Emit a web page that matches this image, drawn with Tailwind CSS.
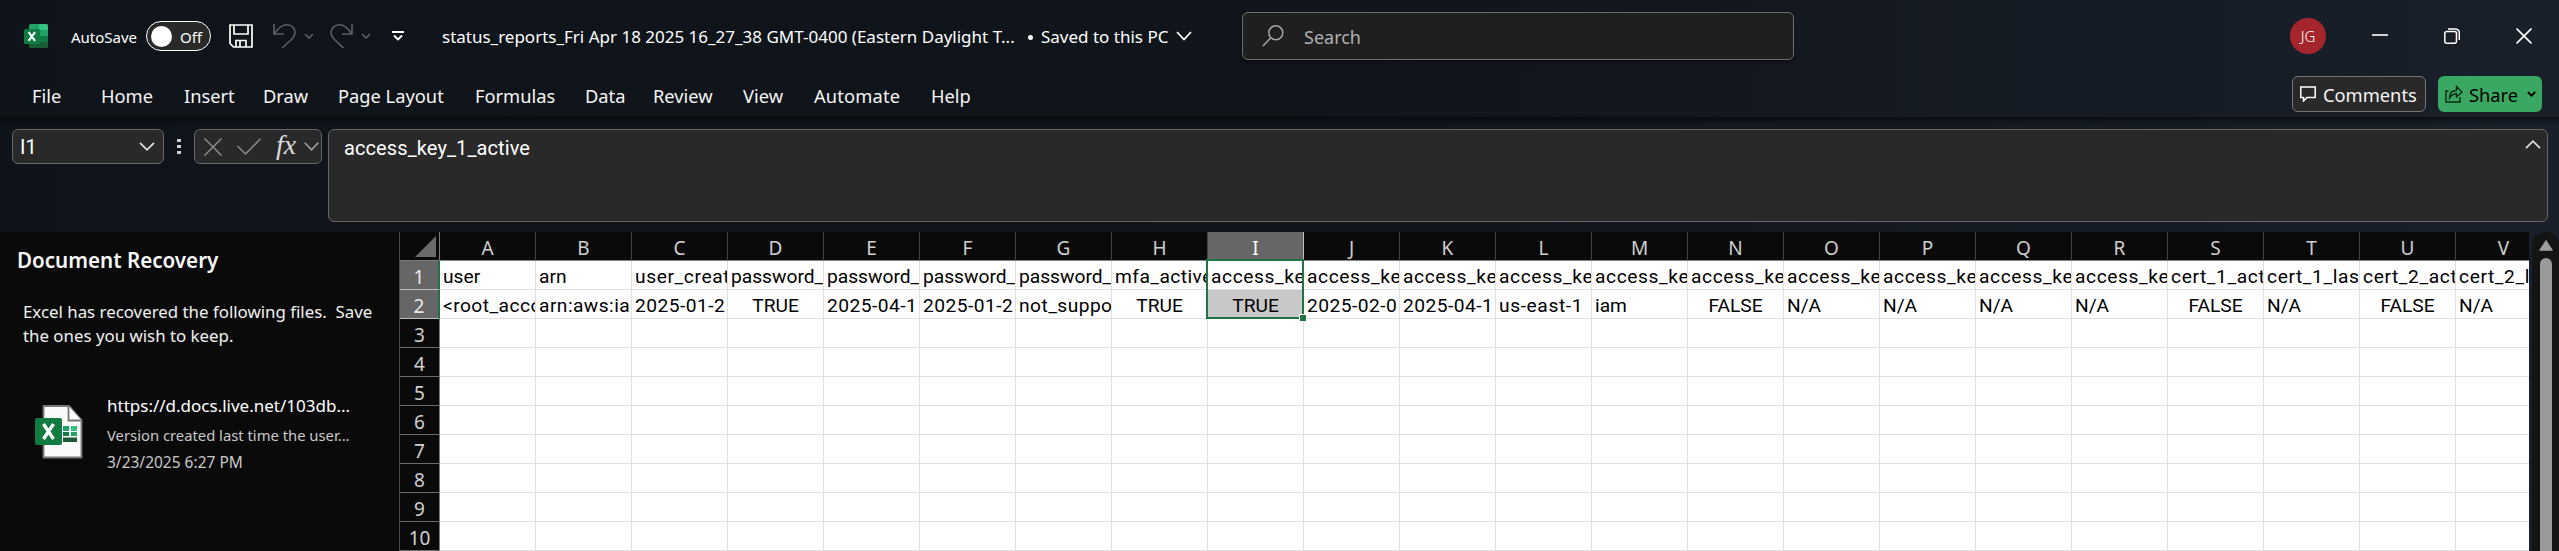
<!DOCTYPE html>
<html lang="en">
<head>
<meta charset="utf-8">
<title>Excel</title>
<script src="https://cdn.jsdelivr.net/npm/@tailwindcss/browser@4"></script>
</head>
<body class="w-[2559px] h-[551px] overflow-hidden flex flex-col bg-linear-to-r from-[#0f131a] via-[#10141b] to-[#19202a] font-['Noto_Sans','Open_Sans',sans-serif] text-white whitespace-nowrap">

<!-- Title bar -->
<header class="h-[72px] shrink-0 flex items-center">
  <svg class="ml-6 w-6 h-6" viewBox="0 0 24 24">
    <path d="M5 1.500a1.500 1.500 0 0 1 1.500-1.500H15v6H5z" fill="#21a366"/><path d="M15 0h7.500A1.500 1.500 0 0 1 24 1.500V6h-9z" fill="#33c481"/>
    <path d="M5 6h10v6H5z" fill="#107c41"/><path d="M15 6h9v6h-9z" fill="#21a366"/><path d="M15 12h9v6h-9z" fill="#107c41"/>
    <path d="M5 12h10v6h9v4.500a1.500 1.500 0 0 1-1.500 1.500h-16A1.500 1.500 0 0 1 5 22.500z" fill="#185c37"/>
    <rect x="0" y="5" width="16" height="15" rx="1.500" fill="#107c41"/>
    <path d="M4.600 8.200l6.400 8.600M11 8.200l-6.400 8.600" stroke="#fff" stroke-width="2.100"/>
  </svg>
  <span class="ml-[23px] mt-[2px] w-[75px] text-[15px]">AutoSave</span>
  <div class="w-[65px] h-[30px] rounded-full border border-white bg-[#292929] flex items-center pl-1">
    <span class="size-[21px] rounded-full bg-white"></span><span class="ml-2 mt-[2px] text-[15px]">Off</span>
  </div>
  <svg class="ml-[18px] w-6 h-6" viewBox="0 0 24 24" fill="none" stroke="#fff" stroke-width="1.700"><path d="M1 1h22v22H4.500L1 19.500zM5 1v9h14V1M7 23v-6.500h10V23M11 17v6"/></svg>
  <svg class="ml-5 w-6 h-6" viewBox="0 0 24 24" fill="none" stroke="#5c5f63" stroke-width="1.600"><path d="M1 0v10h10M1.500 9.500C6 3 10 .8 14 .8c5 0 8 3.600 8 7.700 0 3-1.600 5-3.500 7L9 24"/></svg>
  <svg class="ml-[7px] w-[10px] h-[6px]" viewBox="0 0 10 6" fill="none" stroke="#5c5f63" stroke-width="1.600"><path d="M1 1l4 4 4-4"/></svg>
  <svg class="ml-4 w-6 h-6" viewBox="0 0 24 24" fill="none" stroke="#5c5f63" stroke-width="1.600"><path d="M22 0v10H12M21.500 9.500C17 3 13 .8 9.500 .8 4.500 .8 1 4.400 1 8.500c0 3 1.600 5 3.500 7L13.500 24"/></svg>
  <svg class="ml-[7px] w-[10px] h-[6px]" viewBox="0 0 10 6" fill="none" stroke="#5c5f63" stroke-width="1.600"><path d="M1 1l4 4 4-4"/></svg>
  <svg class="ml-[21px] w-3 h-[10px]" viewBox="0 0 12 10" fill="none" stroke="#fff" stroke-width="1.800"><path d="M0 1h12M2 4.500l4 4 4-4"/></svg>
  <span class="ml-[38px] mt-[2px] w-[587px] text-[17px]">status_reports_Fri Apr 18 2025 16_27_38 GMT-0400 (Eastern Daylight T...</span>
  <span class="size-[5px] mt-[2px] rounded-full bg-white -ml-[1px]"></span>
  <span class="ml-[8px] mt-[2px] w-[133px] text-[17px]">Saved to this PC</span>
  <svg class="ml-[2px] w-4 h-[10px]" viewBox="0 0 16 10" fill="none" stroke="#fff" stroke-width="1.800"><path d="M1 1l7 7.500L15 1"/></svg>
  <div class="ml-[50px] w-[552px] h-12 rounded-md border border-[#6f6f6f] bg-[#1f1f1f] flex items-center shadow-[0_2px_3px_#00000080]">
    <svg class="ml-[19px] w-[22px] h-[22px]" viewBox="0 0 22 22" fill="none" stroke="#a6a6a6" stroke-width="1.500"><circle cx="13.800" cy="7.800" r="7"/><path d="M8.800 12.800L1 21"/></svg>
    <span class="ml-5 mt-[2px] text-[18px] text-[#b0b0b0]">Search</span>
  </div>
  <span class="ml-[496px] size-9 rounded-full bg-[#a4262c] flex items-center justify-center text-[15px] font-light pt-px">JG</span>
  <svg class="ml-[46px] w-4 h-4" viewBox="0 0 16 16" stroke="#fff" stroke-width="1.600"><path d="M0 7h16"/></svg>
  <svg class="ml-14 w-4 h-4" viewBox="0 0 16 16" fill="none" stroke="#fff" stroke-width="1.500"><rect x=".8" y="3.500" width="11.700" height="11.700" rx="2"/><path d="M4 1h7.500a3.800 3.800 0 0 1 3.800 3.800V12"/></svg>
  <svg class="ml-14 w-4 h-4" viewBox="0 0 16 16" stroke="#fff" stroke-width="1.600"><path d="M.5.500l15 15M15.500.500l-15 15"/></svg>
</header>

<!-- Ribbon tabs -->
<nav class="h-[45px] shrink-0 flex items-start text-[18.300px] leading-[47px] text-[#f5f5f5]">
  <span class="ml-8 w-[69px]">File</span><span class="w-[83px]">Home</span><span class="w-[79px]">Insert</span><span class="w-[75px]">Draw</span><span class="w-[137px]">Page Layout</span><span class="w-[110px]">Formulas</span><span class="w-[68px]">Data</span><span class="w-[90px]">Review</span><span class="w-[71px]">View</span><span class="w-[117px] tracking-[0.150px]">Automate</span><span>Help</span>
  <div class="ml-auto mt-1 mr-3 w-[134px] h-9 rounded-md border border-[#757575] bg-[#292929] flex items-center leading-none">
    <svg class="ml-[7px] w-4 h-4" viewBox="0 0 16 16" fill="none" stroke="#fff" stroke-width="1.500"><path d="M.8 1h14.400v10.500H7L3.500 15v-3.500H.8z"/></svg>
    <span class="ml-[7px] mt-[2px]">Comments</span>
  </div>
  <div class="mt-1 mr-[17px] w-[104px] h-9 rounded-md bg-[#3aa862] text-black flex items-center leading-none">
    <svg class="ml-[7px] w-[18px] h-[18px]" viewBox="0 0 18 18" fill="none" stroke="#0b2a17" stroke-width="1.400"><path d="M3.500 6H1v11h14v-5M4.500 13c0-5 3-7.500 7-7.500V1.500L17 7l-5.500 5V8.800C8.500 8.800 6.500 10 4.500 13z"/></svg>
    <span class="ml-[6px] mt-[2px]">Share</span>
    <svg class="ml-[9px] w-[9px] h-[6px]" viewBox="0 0 9 6" fill="none" stroke="#000" stroke-width="1.800"><path d="M.8 1l3.700 3.700L8.200 1"/></svg>
  </div>
</nav>

<!-- Formula bar -->
<section class="h-[115px] shrink-0 flex items-start pt-3 bg-linear-to-b from-black/50 to-transparent to-[8px]">
  <div class="ml-3 w-[152px] h-[35px] rounded-md border border-[#666] bg-[#292929] flex items-center pl-[7px] pr-2 font-[Roboto,sans-serif]">
    <span class="mt-px text-[20px]">I1</span>
    <svg class="ml-auto w-4 h-[9px]" viewBox="0 0 16 9" fill="none" stroke="#e0e0e0" stroke-width="1.700"><path d="M1 .8l7 7 7-7"/></svg>
  </div>
  <div class="ml-[13px] mt-[10px] w-1 flex flex-col gap-[3px]"><i class="w-1 h-[3px] bg-[#d0d0d0]"></i><i class="w-1 h-[3px] bg-[#d0d0d0]"></i><i class="w-1 h-[3px] bg-[#d0d0d0]"></i></div>
  <div class="ml-[13px] w-[128px] h-[35px] rounded-md border border-[#666] bg-[#292929] flex items-center">
    <svg class="ml-[9px] w-[18px] h-[18px]" viewBox="0 0 18 18" stroke="#8a8a8a" stroke-width="1.500"><path d="M.5.500l17 17M17.500.500l-17 17"/></svg>
    <svg class="ml-[15px] w-6 h-[17px]" viewBox="0 0 24 17" fill="none" stroke="#8a8a8a" stroke-width="1.500"><path d="M.5 8l8 8L23.500.800"/></svg>
    <span class="ml-[15px] -mt-1 w-[25px] font-['Liberation_Serif',serif] italic text-[28px] leading-none text-[#dadada]">fx</span>
    <svg class="ml-[3px] w-[15px] h-[9px]" viewBox="0 0 15 9" fill="none" stroke="#a0a0a0" stroke-width="1.600"><path d="M.8.800l6.700 7 6.700-7"/></svg>
  </div>
  <div class="ml-[6px] w-[2220px] h-[93px] rounded-md border border-[#666] bg-[#292929] flex justify-between items-start pl-[15px] pr-[6px]">
    <span class="mt-[6px] font-[Roboto,sans-serif] text-[20px] tracking-[0.100px] leading-6">access_key_1_active</span>
    <svg class="mt-[10px] w-4 h-[9px]" viewBox="0 0 16 9" fill="none" stroke="#e0e0e0" stroke-width="1.700"><path d="M1 8.200l7-7 7 7"/></svg>
  </div>
</section>

<main class="h-[319px] flex">
  <!-- Recovery pane -->
  <aside class="w-[400px] shrink-0 bg-[#0a0a0a] border-r border-[#4a4a4a] flex flex-col">
    <h2 class="ml-[17px] mt-[14px] text-[20.600px] leading-7 font-semibold text-[#f8f8f8]">Document Recovery</h2>
    <p class="ml-[23px] mt-[26px] text-[16.850px] leading-6 whitespace-pre text-[#f2f2f2]">Excel has recovered the following files.  Save
the ones you wish to keep.</p>
    <div class="ml-[35px] mt-[43px] flex">
      <svg class="mt-[14px] w-[48px] h-[54px]" viewBox="0 0 48 54">
        <path d="M8.500 1H34l12.500 14v37.500h-38z" fill="#fafafa" stroke="#797774" stroke-width="1.800"/>
        <path d="M33.500 1v14.500h13" fill="#fff" stroke="#797774" stroke-width="1.800"/>
        <path d="M28 21h6v5h-6z" fill="#21a366"/><path d="M36 21h6v5h-6z" fill="#33c481"/><path d="M28 27h6v4h-6z" fill="#107c41"/><path d="M36 27h6v4h-6z" fill="#21a366"/><path d="M28 32.500h14v4.500H28z" fill="#185c37"/>
        <rect x="0" y="13" width="27" height="27" rx="2" fill="#107c41"/>
        <path d="M8.500 19l10 15M18.500 19l-10 15" stroke="#fff" stroke-width="3.300"/>
      </svg>
      <div class="ml-6 flex flex-col">
        <span class="mt-px text-[17px] leading-7">https://d.docs.live.net/103db...</span>
        <span class="mt-px text-[14.800px] leading-7 text-[#c8c8c8]">Version created last time the user...</span>
        <span class="-mt-px text-[15.500px] leading-7 text-[#c8c8c8]">3/23/2025 6:27 PM</span>
      </div>
    </div>
  </aside>

  <!-- Worksheet -->
  <div class="relative w-[2129px] shrink-0 overflow-hidden bg-white">
    <div id="sheet" class="w-[2152px] flex flex-col"></div>
    <div class="absolute left-[806px] top-[27px] w-[98px] h-[60px] border-2 border-[#217346]"></div>
    <div class="absolute left-[899px] top-[82px] w-[7px] h-[7px] bg-[#217346] border-l border-t border-white"></div>
  </div>

  <!-- Vertical scrollbar -->
  <div class="ml-[3px] w-[27px] rounded-t-[13px] bg-[#141414] flex flex-col items-center pt-2">
    <svg class="w-[14px] h-[11px]" viewBox="0 0 14 11"><path d="M7 .5L13.500 10.500H.5z" fill="#9f9f9f" stroke="#9f9f9f" stroke-linejoin="round"/></svg>
    <div class="mt-[7px] w-3 h-[300px] rounded-t-full bg-[#9a9a9a]"></div>
  </div>
</main>

<script>
const letters = 'ABCDEFGHIJKLMNOPQRSTUV'.split('');
const k = 'access_ke';
const rows = [
  ['user','arn','user_creat','password_','password_','password_','password_','mfa_active',k,k,k,k,k,k,k,k,k,k,'cert_1_act','cert_1_las','cert_2_act','cert_2_l'],
  ['<root_acco','arn:aws:ia','2025-01-2','TRUE','2025-04-1','2025-01-2','not_suppo','TRUE','TRUE','2025-02-0','2025-04-1','us-east-1','iam','FALSE','N/A','N/A','N/A','N/A','FALSE','N/A','FALSE','N/A']
];
const cell = (t, c) => `<div class="${c}">${t.replace('<', '&lt;')}</div>`;
const tracking = t => /^(access|cert|us-|user_)/.test(t) ? 'tracking-[0.600px] ' : /^(2025|<|mfa|arn:|not)/.test(t) ? 'tracking-[0.450px] ' : '';
let html = '<div class="flex h-[29px]"><div class="w-10 shrink-0 border-r border-b border-[#7a7a7a] bg-[#0a0a0a] flex justify-end pr-[3px] pt-1"><svg class="w-[21px] h-[21px]" viewBox="0 0 21 21"><path d="M21 0v21H0z" fill="#6b6b6b"/></svg></div>';
letters.forEach(l => html += cell(l, 'w-24 shrink-0 border-r border-b text-center text-[19px] leading-[33px] ' + (l === 'I' ? 'bg-[#666666] text-white border-[#bdbdbd]' : 'bg-[#0a0a0a] text-[#d0d0d0] border-r-[#444444] border-b-[#8a8a8a]')));
html += '</div>';
for (let r = 0; r < 10; r++) {
  html += '<div class="flex h-[29px]">' + cell(String(r + 1), 'w-10 shrink-0 text-center text-[19px] leading-[32px] border-b ' + (r < 2 ? 'bg-[#666666] text-[#e8e8e8] border-b-[#c0c0c0] border-r-2 border-r-[#217346]' : 'bg-[#0a0a0a] text-[#d0d0d0] border-b-[#6d6d6d] border-r border-r-[#7a7a7a]'));
  for (let c = 0; c < 22; c++) {
    const t = rows[r] ? rows[r][c] : '';
    const centred = t === 'TRUE' || t === 'FALSE';
    html += cell(t, "w-24 shrink-0 overflow-hidden border-r border-b border-[#e0e0e0] font-[Roboto,sans-serif] text-[19.200px] leading-[31px] text-black " + tracking(t) + (centred ? 'text-center ' : 'pl-[3px] ') + (r === 1 && c === 8 ? 'bg-[#c8c8c8]' : ''));
  }
  html += '</div>';
}
document.getElementById('sheet').innerHTML = html;
</script>
</body>
</html>
